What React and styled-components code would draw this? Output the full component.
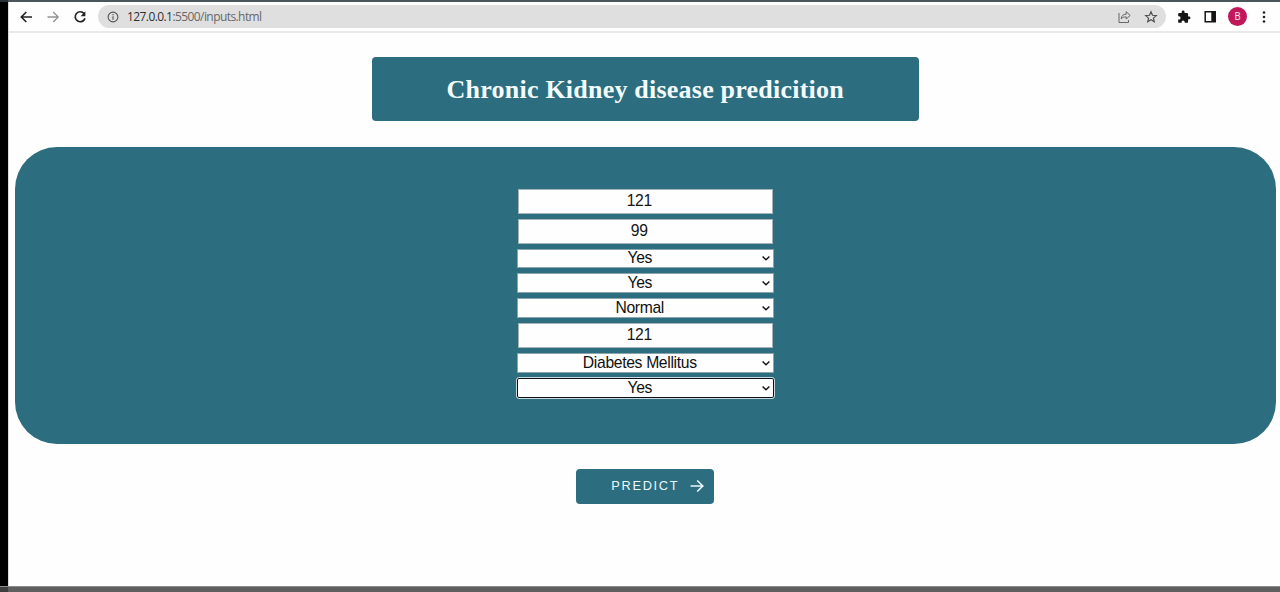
import React from "react";
import styled, { createGlobalStyle } from "styled-components";

const teal = "#2c6e80";

const GlobalStyle = createGlobalStyle`
  * { box-sizing: border-box; }
  body { margin: 0; background: #000; overflow: hidden; }
`;

const Screen = styled.div`
  width: 1280px;
  height: 592px;
  display: flex;
  flex-direction: column;
  background: #000;
`;

const TopStrip = styled.div`
  height: 2px;
  flex: none;
  background: linear-gradient(90deg, #2c3235 0, #2c3235 8px, #4b565a 8px);
`;

const BottomStrip = styled.div`
  height: 6px;
  flex: none;
  border-top: 1px solid #8b8b8b;
  background: linear-gradient(90deg, #3f3f3f 0, #3f3f3f 8px, #5f5f5f 8px);
`;

const Browser = styled.div`
  flex: 1;
  margin-left: 8px;
  border-left: 1px solid #d9d9d9;
  background: #fefefe;
  display: flex;
  flex-direction: column;
`;

const Toolbar = styled.div`
  height: 31px;
  flex: none;
  display: flex;
  align-items: center;
  padding: 0 7px 0 9px;
  border-bottom: 2px solid #e9e9e9;
`;

const Icon = styled.svg`
  display: block;
  flex: none;
  width: ${(p) => p.$size}px;
  height: ${(p) => p.$size}px;
  margin-left: ${(p) => p.$gap || 0}px;
  color: ${(p) => p.$color || "#222"};
  fill: none;
  stroke: currentColor;
  stroke-width: ${(p) => p.$weight || 2};
  overflow: visible;
`;

const AddressBar = styled.div`
  width: 1068px;
  height: 23px;
  margin-left: 10px;
  padding: 0 8px;
  display: flex;
  align-items: center;
  border-radius: 12px;
  background: #dfdfe0;
`;

const Url = styled.span`
  flex: 1;
  margin-left: 7px;
  font: 12px/20px "Open Sans", "Noto Sans", sans-serif;
  letter-spacing: -0.58px;
  color: #686868;
`;

const Host = styled.span`
  color: #303030;
`;

const Avatar = styled.div`
  width: 19px;
  height: 19px;
  margin-left: 11px;
  border-radius: 50%;
  background: #c2185b;
  color: #f7dce6;
  font: 10px/19px Roboto, sans-serif;
  text-align: center;
`;

const Page = styled.main`
  flex: 1;
  display: flex;
  flex-direction: column;
  align-items: center;
  padding: 24px 4.5px 0 6px;
`;

const Title = styled.h1`
  width: 546.5px;
  height: 64px;
  margin: 0;
  border-radius: 4px;
  background: ${teal};
  color: #f4fbfd;
  font: bold 26px/65px "Liberation Serif", serif;
  letter-spacing: 0.22px;
  text-align: center;
`;

const Panel = styled.section`
  align-self: stretch;
  height: 297px;
  margin: 26px 0 25px;
  padding-top: 41.8px;
  display: flex;
  flex-direction: column;
  align-items: center;
  gap: 5px;
  border-radius: 42px;
  background: ${teal};
`;

const Field = styled.div`
  width: 255px;
  height: 24.9px;
  padding-right: 12px;
  border: 1px solid #a5b4b8;
  background: #fefefe;
  color: #161616;
  font: 15.7px/22px "Liberation Sans", Arial, sans-serif;
  letter-spacing: -0.33px;
  text-align: center;
`;

const Select = styled.div`
  width: 257px;
  height: ${(p) => (p.$focused ? 20.3 : 19.8)}px;
  padding: 0 2px 0 0;
  display: flex;
  align-items: center;
  border: 1px solid ${(p) => (p.$focused ? "#08141a" : "#8ca4ac")};
  border-radius: ${(p) => (p.$focused ? 2 : 0)}px;
  outline: ${(p) => (p.$focused ? "1px solid #c9d8dc" : "none")};
  background: #fefefe;
  color: #101010;
  font: 15.7px/18px "Liberation Sans", Arial, sans-serif;
  letter-spacing: -0.33px;
`;

const Value = styled.span`
  flex: 1;
  padding-left: 1px;
  text-align: center;
`;

const PredictButton = styled.button`
  width: 138px;
  height: 35px;
  padding: 0 9px 2px 35px;
  display: flex;
  align-items: center;
  justify-content: space-between;
  border: 0;
  border-radius: 4px;
  background: ${teal};
  color: #eaf7fa;
  font: 12.8px/33px "Liberation Sans", Arial, sans-serif;
  letter-spacing: 1.7px;
`;

function Dropdown({ value, focused }) {
  return (
    <Select $focused={focused}>
      <Value>{value}</Value>
      <Icon $size={10} $color="#111" $weight={1.4} viewBox="0 0 10 10">
        <path d="M1.6 3.6 5 6.8 8.4 3.6" />
      </Icon>
    </Select>
  );
}

export default function App() {
  return (
    <Screen>
      <GlobalStyle />
      <TopStrip />
      <Browser>
        <Toolbar>
          <Icon $size={16} viewBox="0 0 16 16" $weight={1.6}>
            <path d="M14 8H3.4M8.3 3 3.3 8l5 5" />
          </Icon>
          <Icon $size={16} $gap={11} viewBox="0 0 16 16" $weight={1.3} $color="#939393">
            <path d="M2.5 8h10.8M8.2 3l5 5-5 5" />
          </Icon>
          <Icon $size={16} $gap={11} viewBox="0 0 16 16" $weight={1.7}>
            <path d="M12.2 4.7A5 5 0 1 0 13 9.2" />
            <path d="M13.4 2.2v5H8.6z" fill="currentColor" stroke="none" />
          </Icon>
          <AddressBar>
            <Icon $size={14} viewBox="0 0 14 14" $weight={1.1} $color="#555">
              <circle cx="7" cy="7" r="4.9" />
              <path d="M7 6.2v3.5M7 4v1.3" />
            </Icon>
            <Url>
              <Host>127.0.0.1</Host>:5500/inputs.html
            </Url>
            <Icon $size={14} viewBox="0 0 14 14" $weight={1} $color="#666">
              <path d="M2 3v9.500h9.500V10M4.200 8.800c.3-3.200 2-4.500 5-4.600V1.700l4 3.700-4 3.600V6.900c-2.200 0-3.800.4-5 1.900z" />
            </Icon>
            <Icon $size={14} $gap={13} viewBox="0 0 14 14" $weight={1.2} $color="#505050">
              <path d="m7 1.8 1.5 3.5 3.8.3-2.900 2.500.9 3.700L7 9.800l-3.300 2 .9-3.700-2.900-2.500 3.800-.3z" />
            </Icon>
          </AddressBar>
          <Icon $size={14} $gap={11} viewBox="0 0 24 24" $color="#151515">
            <path
              fill="currentColor"
              stroke="none"
              d="M20.500 11H19V7a2 2 0 0 0-2-2h-4V3.500a2.500 2.500 0 0 0-5 0V5H4a2 2 0 0 0-2 2v3.800h1.500a2.700 2.700 0 0 1 0 5.400H2V20a2 2 0 0 0 2 2h3.800v-1.500a2.700 2.700 0 0 1 5.400 0V22H17a2 2 0 0 0 2-2v-4h1.500a2.500 2.500 0 0 0 0-5z"
            />
          </Icon>
          <Icon $size={14} $gap={12} viewBox="0 0 14 14" $weight={1.5} $color="#151515">
            <path d="M2.200 1.800h10v10h-10z" />
            <path d="M8.300 1.500h4.500v10.500H8.300z" fill="currentColor" stroke="none" />
          </Icon>
          <Avatar>B</Avatar>
          <Icon $size={14} $gap={10} viewBox="0 0 14 14" $color="#222">
            <g fill="currentColor" stroke="none">
              <circle cx="7" cy="2.500" r="1.300" />
              <circle cx="7" cy="7" r="1.300" />
              <circle cx="7" cy="11.500" r="1.300" />
            </g>
          </Icon>
        </Toolbar>
        <Page>
          <Title>Chronic Kidney disease predicition</Title>
          <Panel>
            <Field>121</Field>
            <Field>99</Field>
            <Dropdown value="Yes" />
            <Dropdown value="Yes" />
            <Dropdown value="Normal" />
            <Field>121</Field>
            <Dropdown value="Diabetes Mellitus" />
            <Dropdown value="Yes" focused />
          </Panel>
          <PredictButton>
            PREDICT
            <Icon $size={16} $color="#eaf7fa" $weight={1.6} viewBox="0 0 16 16">
              <path d="M1.500 8h12M8.200 2.500 13.800 8l-5.600 5.500" />
            </Icon>
          </PredictButton>
        </Page>
      </Browser>
      <BottomStrip />
    </Screen>
  );
}
